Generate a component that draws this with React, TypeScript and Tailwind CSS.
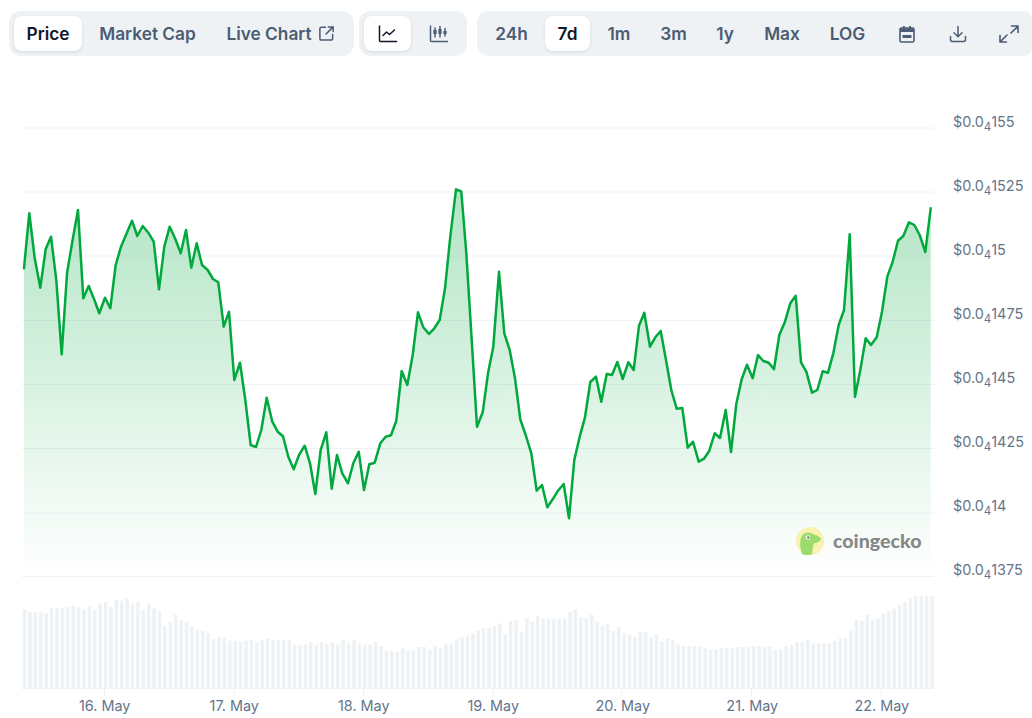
import React from "react";

const P: number[] = [24,268.3,29.3,213.3,34.7,258,40.3,287.7,45.7,249,51,236.7,56.3,280,61.7,354.3,67,273.3,72.3,241.7,78,210,83.3,298.3,88.7,286,94,299,99.3,313.3,105,297.7,110.3,308.3,115.7,265,121,246.7,126.7,233.3,132,220.7,137.3,236,142.7,226,148.3,232.7,153.7,241.7,159,289.3,164.3,246.7,169.7,226.7,175,238.3,180.7,253.3,186,230,191.3,267.7,196.7,243.3,202,265,207.7,270,213,279,218.3,282.3,223.7,326.7,229,311.7,234.3,380,240,362.7,245.3,400,250.7,445,256,447,261.3,430,266.7,397.7,272.3,421.7,277.7,431.7,283,436.3,288.3,456.7,293.7,469.3,299,455,304.7,445.7,310,463.3,315.3,494,320.7,450,326.3,432.3,331.7,488.7,337,455,342.3,473.3,348,483.3,353.3,463.3,358.7,451.7,364,490,369.3,464.3,374.7,462.7,380.3,443.3,385.7,436.7,391,435.3,396.3,420.7,401.7,371,407.3,385,412.7,355,418,312.3,423.3,327.3,429,334,434.3,328.3,439.7,320,445,288.3,450.3,236.7,456,189.3,461.3,191.5,466.3,253,471.7,340,477,426.7,482.7,412.3,488,373.3,493.3,346.7,499,271.7,504.3,333.3,509.7,350,515,378.3,520.3,419.3,525.7,435,531.3,453.3,536.7,490.7,542,485,547.3,507.3,552.7,499.3,558,490.7,563.7,484,569,518.3,574.3,460,579.7,436.7,585,417.3,590.3,382,596,376.7,601.3,401.7,606.7,374,612,375,617.3,362,622.7,379,628.3,362.3,633.7,370,639,325.7,644.3,312.7,650,346.7,655.3,337.3,660.7,331,666,360,671.3,390,676.7,408.7,682.3,408,687.7,447.7,693,441.7,698.7,461.7,704,458.7,709.3,450.7,714.7,433.3,720,438,725.7,410,731,452,736.3,404,741.7,379.3,747,364.7,752.7,378.3,758,355,763.3,361,768.7,362.7,774,369.3,779.3,335,785,321.7,790.3,303.3,795.7,295.7,801,362.3,806.3,371.7,812,392.7,817.3,390,822.7,371.3,828,372.7,833.3,353.3,838.7,325,844,310,849.7,234.3,855,396.7,860.3,370,865.7,338.3,871,345,876.7,337.3,882,311.7,887.3,276.7,892.7,261.7,898,240.7,903.3,236,909,222.3,914.3,225,919.7,235,925.3,252,930.7,208.3];

const linePts: string[] = [];
for (let i = 0; i < P.length; i += 2) linePts.push(`${P[i]},${P[i + 1]}`);
const line = linePts.join(" ");
const area = `24,577 ${line} 930.7,577`;

const A = [119,126,126,126,130,115,115,115,111,108,111,119,108,119,100,96,111,89,92,85,104,96,119,104,115,122,168,156,134,149,156,168,179,182,190,208,201,205,212,212,216,212];
const B = [149,156,149,145,149,149,149,149,164,164,164,156,164,156,160,156,164,149,160,149,160,164,164,156,168,182,182,186,175,182,179,171,171,179,168,175,164,160,149,141,138,130,123,115,112,108,100,134,93,89,126,85,96,78,85,85,85,85,85,66,59,82,85,74,96];
const C = [108,100,123,111,130,134,141,126,126,141,134,153,145,149,164,168,168,168,171,175,179,179,175,175,175,171,171,171,168,168,171,171,179,179,168,164,156,156,149,160,160,160,160,153,145,145,119,89,93,74,89,85,70,63,55,44,36,25,18,18,18,18];
const tops = [...A.map((v) => 570 + v / 3), ...B.map((v) => 590 + v / 3), ...C.map((v) => 590 + v / 3)];

const grid = [128, 192, 256, 320.5, 384.5, 448.5, 513, 576.5];
const ticks = [104.5, 234, 363.5, 493, 622, 751.5, 881];
const yLabels = ["155", "1525", "15", "1475", "145", "1425", "14", "1375"];
const xLabels = ["16. May", "17. May", "18. May", "19. May", "20. May", "21. May", "22. May"];

function Btn({ children, active, w }: { children: React.ReactNode; active?: boolean; w: string }) {
  return (
    <div
      className={
        w + " h-[35px] shrink-0 flex items-center justify-center rounded-lg text-[17.3px] font-semibold leading-none whitespace-nowrap " +
        (active ? "bg-white text-[#0f172a] shadow-[0_1px_3px_rgba(15,23,42,0.12)]" : "text-[#4b5c73]")
      }
    >
      {children}
    </div>
  );
}

const Ic = ({ children }: { children: React.ReactNode }) => (
  <svg width="20" height="20" viewBox="0 0 20 20" fill="none" stroke="currentColor" strokeWidth="1.5" strokeLinecap="round" strokeLinejoin="round">
    {children}
  </svg>
);

export default function App() {
  return (
    <div className="w-[1032px] h-[718px] bg-white overflow-hidden relative" style={{ fontFamily: "Inter, 'Liberation Sans', sans-serif" }}>
      <div className="flex pt-[11px] pl-[9px]">
        <div className="flex gap-1 h-[45px] items-center px-[5px] rounded-xl bg-[#eff2f5] w-[345px]">
          <Btn active w="w-[68px]">Price</Btn>
          <Btn w="w-[123px]">Market Cap</Btn>
          <Btn w="w-[135px]">
            <span className="pr-[6px]">Live Chart</span>
            <svg width="17" height="17" viewBox="0 0 18 18" fill="none" stroke="currentColor" strokeWidth="1.6" strokeLinecap="round" strokeLinejoin="round">
              <path d="M8 2.5H3.5a1.5 1.5 0 0 0-1.5 1.5v10.5A1.5 1.5 0 0 0 3.5 16H14a1.5 1.5 0 0 0 1.5-1.5V10" />
              <path d="M11 2h5v5M16 2 8.5 9.5" />
            </svg>
          </Btn>
        </div>
        <div className="flex gap-1 h-[45px] items-center px-[5px] rounded-xl bg-[#eff2f5] ml-[5px] w-[108px]">
          <Btn active w="w-[47px]">
            <Ic>
              <path d="M1.5 2v14.5a1 1 0 0 0 1 1h16" />
              <path d="M5 11.5 8.5 8l3 2.5L16.5 6" />
            </Ic>
          </Btn>
          <Btn w="w-[47px]">
            <Ic>
              <path d="M1.5 2v14.5a1 1 0 0 0 1 1h16" />
              <path d="M6 4v9M11 2.5V13M16 4.5V12" strokeWidth="1.5" />
              <path d="M6 6v4M11 5v5M16 7v3" strokeWidth="3.2" strokeLinecap="butt" />
            </Ic>
          </Btn>
        </div>
        <div className="flex gap-1 h-[45px] items-center pl-[5px] rounded-l-xl rounded-r-lg bg-[#eff2f5] ml-[10px] w-[555px]">
          <Btn w="w-[59px]">24h</Btn>
          <Btn active w="w-[45px]">7d</Btn>
          <Btn w="w-[50px]">1m</Btn>
          <Btn w="w-[51px]">3m</Btn>
          <Btn w="w-[44px]">1y</Btn>
          <Btn w="w-[62px]">Max</Btn>
          <Btn w="w-[61px]">LOG</Btn>
          <Btn w="w-[49px]">
            <svg width="20" height="20" viewBox="0 0 20 20" fill="none">
              <path d="M3 5.5A1.5 1.5 0 0 1 4.5 4h11A1.5 1.5 0 0 1 17 5.5V16.5A1.5 1.5 0 0 1 15.5 18h-11A1.5 1.5 0 0 1 3 16.5Z" stroke="currentColor" strokeWidth="1.6" />
              <path d="M3 4.5h14V8H3zM6 2h1.8v3H6zM12.2 2H14v3h-1.8zM5.5 11h9v3h-9z" fill="currentColor" />
            </svg>
          </Btn>
          <Btn w="w-[46px]">
            <Ic>
              <path d="M10 2.5V12.5M6 8.8l4 3.9 4-3.9" />
              <path d="M2.5 12.5v3A2 2 0 0 0 4.5 17.5h11a2 2 0 0 0 2-2v-3" />
            </Ic>
          </Btn>
          <Btn w="w-[48px]">
            <svg width="22" height="22" viewBox="0 0 22 22" fill="none" stroke="currentColor" strokeWidth="1.6" strokeLinecap="round" strokeLinejoin="round">
              <path d="M13.5 3H20V9.5M20 3l-7 7M8.5 19H2V12.5M2 19l7-7" />
            </svg>
          </Btn>
        </div>
      </div>

      <div className="flex mt-[14px]">
        <svg width="934" height="626" viewBox="0 70 934 626" className="shrink-0 block">
          <defs>
            <linearGradient id="g" gradientUnits="userSpaceOnUse" x1="0" y1="190" x2="0" y2="577">
              <stop offset="0" stopColor="#00a83e" stopOpacity="0.3" />
              <stop offset="1" stopColor="#00a83e" stopOpacity="0" />
            </linearGradient>
          </defs>
          {grid.map((y) => (
            <line key={y} x1="22" x2="934" y1={y} y2={y} stroke="#eff2f5" strokeWidth="1" />
          ))}
          <polygon points={area} fill="url(#g)" />
          <polyline points={line} fill="none" stroke="#00a83e" strokeWidth="2.5" strokeLinejoin="round" strokeLinecap="round" />
          {tops.map((t, i) => (
            <rect key={i} x={22.7 + i * 5.402} y={t} width="3.6" height={688 - t} fill="#eff2f5" />
          ))}
          <line x1="22" x2="934" y1="688.5" y2="688.5" stroke="#eff2f5" strokeWidth="1" />
          {ticks.map((x) => (
            <line key={x} x1={x} x2={x} y1="689" y2="696" stroke="#eff2f5" strokeWidth="1" />
          ))}
        </svg>
        <div className="flex flex-col pt-[42px] pl-[19px]">
          {yLabels.map((v) => (
            <div key={v} className="h-[64px] text-[14.4px] leading-[20px] text-[#64748b] whitespace-nowrap">
              $0.0<sub className="text-[11.5px] leading-none align-[-4px]" style={{ bottom: "auto" }}>4</sub>{v}
            </div>
          ))}
        </div>
      </div>

      <div className="flex pl-[40px]">
        {xLabels.map((v) => (
          <div key={v} className="w-[129.5px] text-center text-[14.4px] leading-[20px] text-[#64748b] whitespace-nowrap">{v}</div>
        ))}
      </div>

      <div className="absolute left-[796px] top-[527px] flex items-center gap-[9px] opacity-90">
        <svg width="28" height="28" viewBox="0 0 28 28">
          <circle cx="14" cy="14" r="14" fill="#fbefa8" />
          <path d="M6 27 C3.5 20 3.5 12 6.5 8 C9 5 14 5.5 17 7 C20 8.2 24 9.5 25 12 C24 15 20 16 17.5 16.5 C17.5 20 16 24 16 27.5 C12 28.5 8.5 28 6 27Z" fill="#8fd95c" />
          <circle cx="12" cy="10.5" r="2.3" fill="#fff" />
          <circle cx="12.3" cy="10.5" r="1.2" fill="#5a6b55" />
        </svg>
        <span className="text-[19.6px] font-black leading-none text-[#7b7b7b]" style={{ fontFamily: "Lato, sans-serif" }}>coingecko</span>
      </div>
    </div>
  );
}
